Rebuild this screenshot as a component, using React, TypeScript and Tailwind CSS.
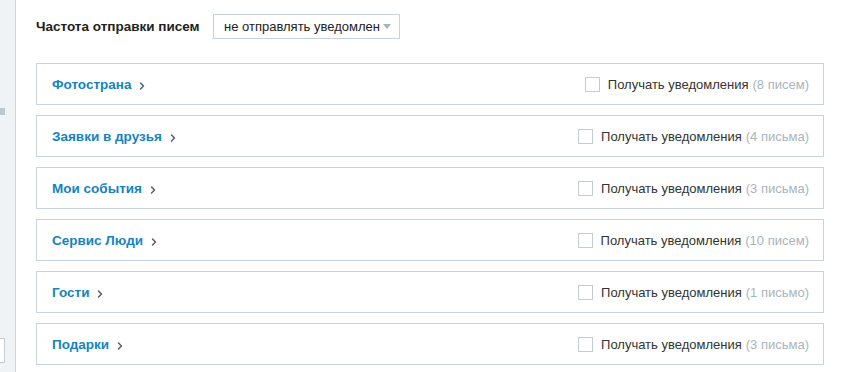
import { ChevronRight } from 'lucide-react';

const rows = [
  { title: 'Фотострана', count: '8 писем' },
  { title: 'Заявки в друзья', count: '4 письма' },
  { title: 'Мои события', count: '3 письма' },
  { title: 'Сервис Люди', count: '10 писем' },
  { title: 'Гости', count: '1 письмо' },
  { title: 'Подарки', count: '3 письма' },
];

export default function App() {
  return (
    <div className="flex h-[372px] w-[843px] overflow-hidden bg-white font-['Liberation_Sans',Arial,sans-serif] text-[13px]">
      {/* left sidebar strip */}
      <div className="relative w-[16px] shrink-0 border-r border-[#cbd5dd] bg-[#f0f3f6]">
        <div className="absolute left-0 top-[108px] h-[7px] w-[5px] bg-[#bcc7d0]" />
        <div className="absolute left-[-1px] top-[338px] h-[25px] w-[6px] border border-[#c2ced7] bg-white" />
      </div>

      <div className="flex flex-1 flex-col pl-[20px] pr-[19px] pt-[14px]">
        {/* frequency */}
        <div className="flex items-center">
          <span className="w-[177px] pt-[1px] text-[13.5px] font-bold text-[#222]">Частота отправки писем</span>
          <div className="flex h-[25px] w-[187px] items-center justify-between border border-[#c8d3db] bg-white pl-[10px] pr-[8px] text-[#222]">
            <span className="pt-[1px]">не отправлять уведомлен</span>
            <span className="h-0 w-0 border-x-[4px] border-t-[5px] border-x-transparent border-t-[#a7b2ba]" />
          </div>
        </div>

        {/* sections */}
        <div className="mt-[24px] flex flex-col gap-[10px]">
          {rows.map((r) => (
            <div
              key={r.title}
              className="flex h-[42px] items-center justify-between border border-[#c8d3db] bg-white pl-[15px] pr-[14px]"
            >
              <div className="flex items-center gap-[5px] pt-[3px]">
                <span className="text-[13.5px] font-bold text-[#1582c3]">{r.title}</span>
                <ChevronRight className="h-[12px] w-[12px] text-[#55606a]" strokeWidth={3} />
              </div>
              <label className="flex items-center">
                <span className="mr-[8px] h-[15px] w-[15px] border border-[#c2ced7] bg-white" />
                <span className="pt-[2px] text-[#333]">Получать уведомления</span>
                <span className="ml-[4px] pt-[2px] text-[#a9b4bc]">({r.count})</span>
              </label>
            </div>
          ))}
        </div>
      </div>
    </div>
  );
}
